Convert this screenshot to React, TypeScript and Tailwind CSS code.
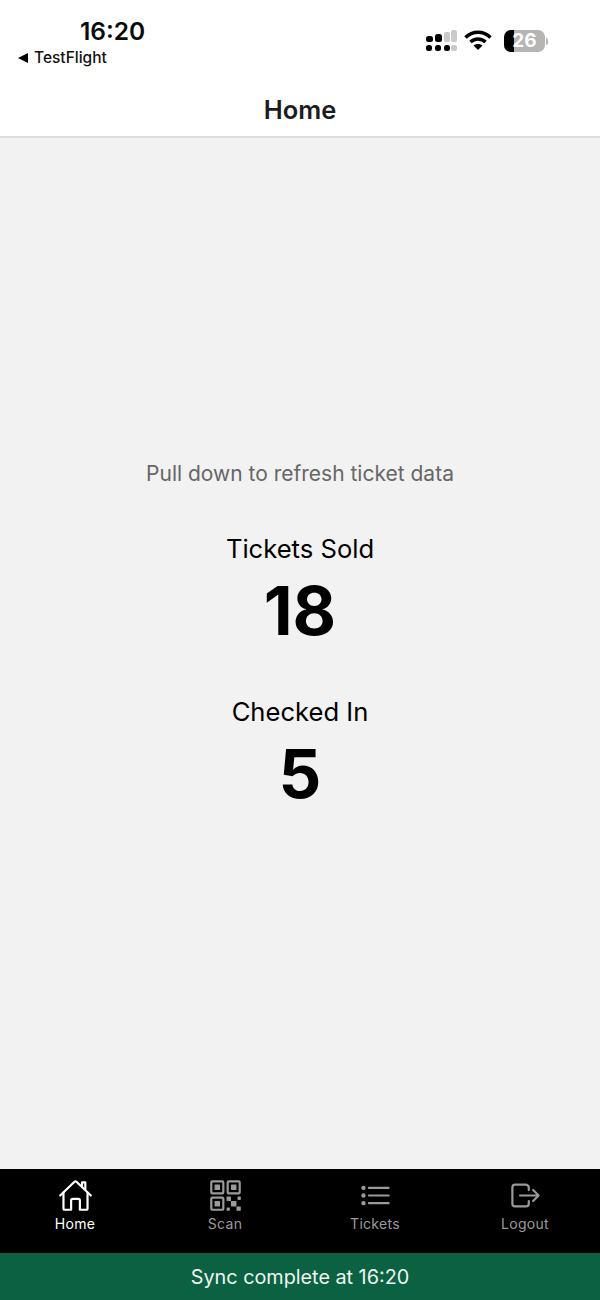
import { IoHomeOutline, IoQrCodeOutline, IoListOutline, IoLogOutOutline } from 'react-icons/io5';

const font = { fontFamily: 'Inter, "Liberation Sans", sans-serif' };

function StatusBar() {
  return (
    <div className="h-[82px] flex justify-between">
      <div className="pl-[18px] pt-[16px] flex flex-col">
        <div className="ml-[62px] text-[24.5px] leading-[30px] font-semibold text-[#0a0a0a]">16:20</div>
        <div className="flex items-center gap-[6px] mt-[2px] text-[15.5px] leading-[20px] font-medium text-[#111]">
          <svg width="10" height="10" viewBox="0 0 10 10"><path d="M0 5 L10 0 V10 Z" fill="#000" /></svg>
          TestFlight
        </div>
      </div>
      <div className="flex items-start pt-[30px] pr-[52px]">
        <svg width="32" height="21" viewBox="0 0 32 21" fill="#000">
          <rect x="0" y="6" width="7" height="6" rx="2.5" />
          <rect x="9" y="4" width="7" height="8" rx="2.5" />
          <rect x="18" y="2" width="6" height="10" rx="2" fill="#c9c9c9" />
          <rect x="25" y="0" width="6" height="12" rx="2" fill="#c9c9c9" />
          <rect x="0" y="15" width="6" height="6" rx="2.5" />
          <rect x="9" y="15" width="6" height="6" rx="2.5" />
          <rect x="18" y="15" width="6" height="6" rx="2.5" />
          <rect x="25" y="15" width="6" height="6" rx="2" fill="#c9c9c9" />
        </svg>
        <svg className="ml-[6px]" width="28" height="20" viewBox="0 0 28 20" fill="none" stroke="#000" strokeWidth="3.4">
          <path d="M1.5 7.5 C8.5 0.5 19.5 0.5 26.5 7.5" />
          <path d="M6.5 12 C10.5 8 17.5 8 21.5 12" />
          <path d="M14 20 L9.5 15.5 C12 13.5 16 13.5 18.5 15.5 Z" fill="#000" stroke="none" />
        </svg>
        <div className="relative ml-[12px] flex items-center">
          <div className="relative w-[41px] h-[22px] rounded-[7px] overflow-hidden bg-[#b5b5b5]">
            <div className="w-[10px] h-full bg-black" />
            <div className="absolute inset-0 flex items-center justify-center text-[19px] font-bold text-white">26</div>
          </div>
          <div className="w-[2px] h-[7px] ml-[1px] rounded-r-sm bg-[#b5b5b5]" />
        </div>
      </div>
    </div>
  );
}

function Stat({ label, value }: { label: string; value: string }) {
  return (
    <div className="flex flex-col items-center">
      <div className="text-[25.6px] leading-[34px] text-black">{label}</div>
      <div className="text-[67px] leading-[72px] mt-[9px] font-bold text-black">{value}</div>
    </div>
  );
}

export default function App() {
  const tabs = [
    { name: 'Home', Icon: IoHomeOutline, active: true },
    { name: 'Scan', Icon: IoQrCodeOutline, active: false },
    { name: 'Tickets', Icon: IoListOutline, active: false },
    { name: 'Logout', Icon: IoLogOutOutline, active: false },
  ];

  return (
    <div className="w-[600px] h-[1300px] flex flex-col bg-[#f2f2f2]" style={font}>
      <div className="bg-white border-b-2 border-[#dcdcdc]">
        <StatusBar />
        <div className="h-[54px] pt-[2px] flex items-center justify-center text-[25.5px] font-semibold text-[#1c1c1e]">Home</div>
      </div>

      <div className="flex-1 flex flex-col items-center pt-[321px]">
        <div className="text-[21px] leading-[30px] text-[#666]">Pull down to refresh ticket data</div>
        <div className="mt-[43px] flex flex-col gap-[48px]">
          <Stat label="Tickets Sold" value="18" />
          <Stat label="Checked In" value="5" />
        </div>
      </div>

      <div className="h-[84px] bg-black flex">
        {tabs.map(({ name, Icon, active }) => (
          <div key={name} className={`flex-1 flex flex-col items-center pt-[9px] ${active ? 'text-white' : 'text-[#9a9a9a]'}`}>
            <Icon size={35} />
            <div className="text-[14px] leading-[18px] mt-[2px] tracking-[0.3px]">{name}</div>
          </div>
        ))}
      </div>

      <div className="h-[47px] pt-[2px] bg-[#0a6243] flex items-center justify-center text-[19.8px] text-[#f0f5f2]">
        Sync complete at 16:20
      </div>
    </div>
  );
}
